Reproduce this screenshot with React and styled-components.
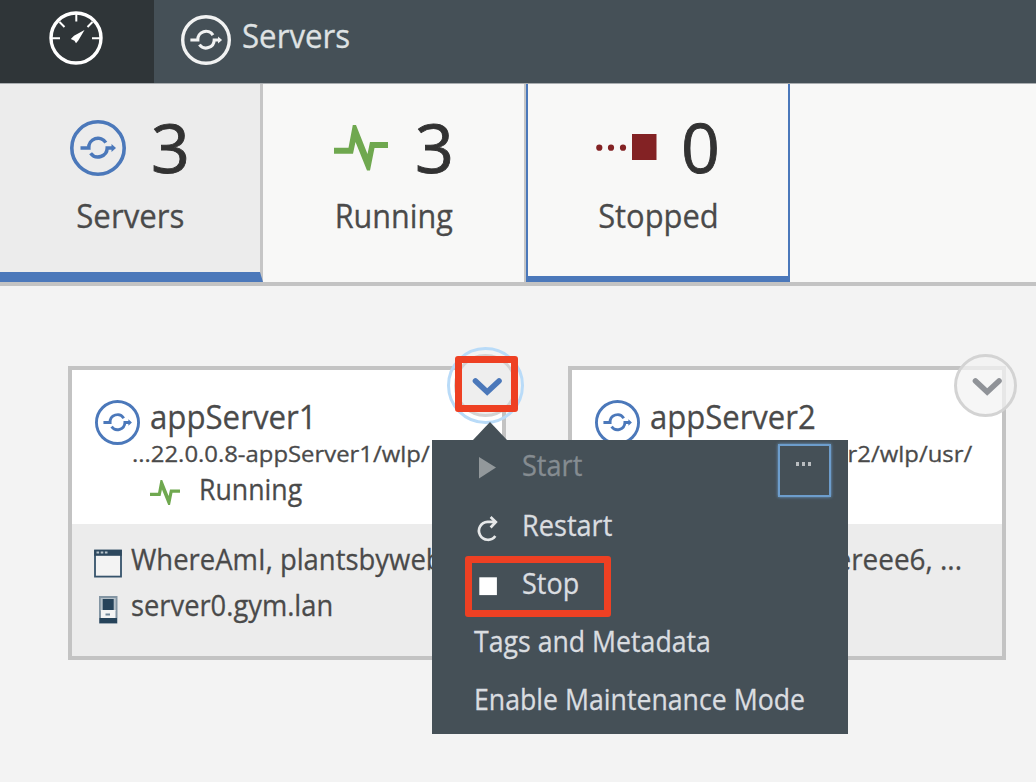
import React from "react";
import styled, { createGlobalStyle, css } from "styled-components";

const GlobalStyle = createGlobalStyle`
  * { box-sizing: border-box; }
  body {
    margin: 0;
    background: #f3f3f3;
    font-family: "Open Sans", "Noto Sans", sans-serif;
    color: #4a4a4a;
    overflow: hidden;
  }
  svg { display: block; flex: none; }
`;

const Page = styled.div`
  position: relative;
  width: 1036px;
  height: 782px;
  overflow: hidden;
`;

const Text = styled.span`
  display: block;
  flex: none;
  white-space: pre;
  font-size: ${(p) => p.$size}px;
  line-height: ${(p) => p.$line || 40}px;
  -webkit-text-stroke: ${(p) => p.$weight || 0.3}px currentColor;
  transform: scaleX(${(p) => p.$stretch || 1});
  transform-origin: ${(p) => p.$origin || "left"} center;
`;

const Header = styled.header`
  display: flex;
  height: 84px;
  background: #455057;
  border-bottom: 1px solid #a9adb0;
`;

const HomeButton = styled.div`
  width: 154px;
  padding: 11px 0 0 49px;
  background: #2f3538;
`;

const HeaderTitle = styled.div`
  display: flex;
  padding: 15px 0 0 27px;
  color: #dfe2e3;

  ${Text} {
    margin: 1px 0 0 11px;
  }
`;

const Tiles = styled.nav`
  display: flex;
  height: 202px;
  background: #f8f8f7;
  border-bottom: 4px solid #c3c3c3;
`;

const Tile = styled.div`
  display: flex;
  flex-direction: column;
  align-items: center;
  width: 264px;
  padding-top: 34px;
  border-right: 3px solid #c6c6c6;
  ${(p) =>
    p.$selected &&
    css`
      width: 263px;
      margin-right: 1px;
      background: #ececec;
      border-bottom: 10px solid #4b78ba;
    `}
  ${(p) =>
    p.$focused &&
    css`
      border: solid #4b78ba;
      border-width: 0 2px 6px 2px;
    `}
  ${(p) =>
    p.$plain &&
    css`
      width: 262px;
      border-right: 2px solid #c6c6c6;
    `}
`;

const Tally = styled.div`
  display: flex;
  align-items: center;
  gap: ${(p) => p.$gap}px;
  height: 60px;
  margin-bottom: 18px;
  color: #323232;

  ${Text} {
    margin-top: -2px;
  }
`;

const Cards = styled.main`
  display: flex;
  gap: 62px;
  padding: 80px 0 0 68px;
`;

const Card = styled.section`
  position: relative;
  width: 438px;
  height: 294px;
  border: 4px solid #c3c3c3;
  background: #fff;
`;

const CardTop = styled.div`
  display: flex;
  gap: 10px;
  height: 154px;
  padding: 30px 0 0 23px;
`;

const CardInfo = styled.div`
  flex: 1;
  min-width: 0;
  margin-top: -3px;
`;

const PathLine = styled.div`
  display: flex;
  justify-content: ${(p) => (p.$end ? "flex-end" : "flex-start")};
  margin: -1px 0 0 -18px;
  padding-right: 30px;
  height: 33px;
`;

const State = styled.div`
  display: flex;
  align-items: center;
  gap: 19px;

  svg {
    margin-top: 7px;
  }
`;

const CardBottom = styled.div`
  height: 132px;
  padding: 17px 0 0 22px;
  background: #ececec;
`;

const Detail = styled.div`
  display: flex;
  align-items: center;
  justify-content: ${(p) => (p.$end ? "flex-end" : "flex-start")};
  gap: 8px;
  height: 40px;
  margin-bottom: 6px;
  padding-right: ${(p) => (p.$end ? 40 : 0)}px;

  svg {
    margin-top: 4px;
  }

  ${Text} {
    margin-top: -4px;
  }
`;

const ActionButton = styled.div`
  position: absolute;
  top: -16px;
  right: -15px;
  display: flex;
  align-items: center;
  justify-content: center;
  width: 63px;
  height: 63px;
  border: 3px solid #d3d3d3;
  border-radius: 50%;
  background: ${(p) => (p.$active ? "#eeeeee" : "rgba(243, 243, 243, 0.75)")};

  svg {
    position: relative;
    top: 1px;
    left: 1px;
  }
  ${(p) =>
    p.$active &&
    css`
      &::after {
        content: "";
        position: absolute;
        inset: -10px;
        border: 3px solid #b9dbf8;
        border-radius: 50%;
      }
    `}
`;

const Menu = styled.div`
  position: absolute;
  left: 432px;
  top: 440px;
  width: 416px;
  height: 294px;
  padding: 5px 0 0 42px;
  background: #455057;
  color: #dadde0;
`;

const MenuArrow = styled.div`
  position: absolute;
  top: -18px;
  left: 41px;
  border: solid transparent;
  border-width: 0 17px 18px 17px;
  border-bottom-color: #455057;
`;

const MenuItem = styled.div`
  display: flex;
  align-items: center;
  height: 40px;
  margin-bottom: ${(p) => p.$after || 18}px;
  color: ${(p) => (p.$disabled ? "#858c91" : "inherit")};

  svg {
    width: 48px;
    height: 40px;
  }
`;

const MoreButton = styled.div`
  position: absolute;
  top: 4px;
  right: 17px;
  display: flex;
  justify-content: center;
  gap: 3px;
  width: 53px;
  height: 53px;
  padding: 16px 3px 0 0;
  border: 2px solid #6d9dcc;
  box-shadow: 0 0 3px #6d9dcc;
`;

const Dot = styled.i`
  width: 3px;
  height: 4px;
  background: #b9bdc0;
`;

const Highlight = styled.div`
  position: absolute;
  left: ${(p) => p.$x}px;
  top: ${(p) => p.$y}px;
  width: ${(p) => p.$w}px;
  height: ${(p) => p.$h}px;
  border: 7px solid #ee4023;
  border-radius: 3px;
`;

const ServerIcon = ({ size, color = "#4b78ba", stroke = 3.6 }) => (
  <svg width={size} height={size} viewBox="0 0 56 56" fill="none" stroke={color} strokeWidth={stroke}>
    <circle cx="28" cy="28" r={28 - stroke / 2} />
    <path
      d="M10.5 28H18.8A9.2 9.2 0 0 1 35.8 22.6M20.6 33.2A9.2 9.2 0 0 0 37.2 28H43"
      strokeWidth="3.5"
    />
    <path d="M41.5 24L46 28L41.5 32Z" fill={color} stroke="none" />
  </svg>
);

const GaugeIcon = () => (
  <svg width="54" height="54" viewBox="0 0 54 54" fill="none" stroke="#fff">
    <circle cx="27" cy="27" r="25" strokeWidth="3.4" />
    <path d="M27.3 3V10.5M3 27.3H11M43 27.3H51M10.5 11L15.5 16M43.5 11L38.5 16" strokeWidth="2" />
    <path d="M35.5 19L29.3 29.5L27 32.3L25.5 29.8L21.8 28L25 24.8Z" fill="#fff" stroke="none" />
  </svg>
);

const PulseIcon = ({ width }) => (
  <svg width={width} height={(width * 46) / 54} viewBox="0 0 54 46" fill="#6fa84f">
    <path d="M0 22.8H14.5L18.8 0H22L33.5 29L36 17H54V23H40.5L36 45.5H33L21.5 17L19 28.8H0Z" />
  </svg>
);

const StoppedIcon = () => (
  <svg width="61" height="28" viewBox="0 0 61 28" fill="#832224">
    <circle cx="3.3" cy="13.7" r="3.1" />
    <circle cx="15" cy="13.7" r="3.1" />
    <circle cx="27" cy="13.7" r="3.1" />
    <rect x="36" y="0" width="24.5" height="26" />
  </svg>
);

const ChevronIcon = ({ color }) => (
  <svg width="32" height="20" viewBox="0 0 32 20" fill="none" stroke={color} strokeWidth="5.6" strokeLinecap="round">
    <path d="M4.5 4L16.2 15L28 4" />
  </svg>
);

const WindowIcon = () => (
  <svg width="29" height="40" viewBox="0 0 29 40">
    <rect x="1" y="7.6" width="26" height="26" fill="#f3f3f3" stroke="#36536b" strokeWidth="1.8" />
    <rect x="0.2" y="6.8" width="27.6" height="6" fill="#2d485e" />
    <path d="M2.5 9.5H14.5" stroke="#b8c3cb" strokeWidth="2" strokeDasharray="2.6 1.6" />
  </svg>
);

const HostIcon = () => (
  <svg width="29" height="40" viewBox="0 0 29 40">
    <rect x="5" y="7" width="18.5" height="27.5" fill="#8395a3" />
    <rect x="6.7" y="9" width="15" height="13" fill="#b5c0c8" />
    <rect x="8.7" y="10" width="11" height="11" fill="#26435a" />
    <rect x="7" y="21" width="14.5" height="8" fill="#f4f4f4" />
    <rect x="11.5" y="24.5" width="4.5" height="2" fill="#71889a" />
    <rect x="5.5" y="29" width="17.5" height="5.2" fill="#26435a" />
  </svg>
);

const StartIcon = () => (
  <svg viewBox="0 0 48 40">
    <path d="M5 12L22 22.5L5 33.5Z" fill="#92989b" />
  </svg>
);

const RestartIcon = () => (
  <svg viewBox="0 0 48 40" fill="none" stroke="#e6e8e9" strokeWidth="2.7">
    <path d="M21.3 31A9 9 0 1 1 13.5 16.8H20" />
    <path d="M16.6 12L21.8 17L16.6 22.5" />
  </svg>
);

const StopIcon = () => (
  <svg viewBox="0 0 48 40">
    <rect x="5.3" y="14.3" width="17.6" height="17.8" fill="#fff" />
  </svg>
);

export default function App() {
  return (
    <Page>
      <GlobalStyle />
      <Header>
        <HomeButton>
          <GaugeIcon />
        </HomeButton>
        <HeaderTitle>
          <ServerIcon size={50} color="#f1f2f2" stroke={3.8} />
          <Text $size={32} $stretch={0.975}>Servers</Text>
        </HeaderTitle>
      </Header>

      <Tiles>
        <Tile $selected>
          <Tally $gap={25}>
            <ServerIcon size={56} />
            <Text $size={68} $line={58} $weight={0.9}>3</Text>
          </Tally>
          <Text $size={32.5} $stretch={0.96} $origin="center">Servers</Text>
        </Tile>
        <Tile $plain>
          <Tally $gap={27}>
            <PulseIcon width={54} />
            <Text $size={68} $line={58} $weight={0.9}>3</Text>
          </Tally>
          <Text $size={32.5} $stretch={0.94} $origin="center">Running</Text>
        </Tile>
        <Tile $focused>
          <Tally $gap={24}>
            <StoppedIcon />
            <Text $size={68} $line={58} $weight={0.9}>0</Text>
          </Tally>
          <Text $size={32.5} $stretch={0.95} $origin="center">Stopped</Text>
        </Tile>
      </Tiles>

      <Cards>
        <Card>
          <CardTop>
            <ServerIcon size={45} />
            <CardInfo>
              <Text $size={32.5} $stretch={0.96}>appServer1</Text>
              <PathLine>
                <Text $size={22} $line={34} $stretch={1.085}>...22.0.0.8-appServer1/wlp/</Text>
              </PathLine>
              <State>
                <PulseIcon width={30} />
                <Text $size={29} $stretch={0.92}>Running</Text>
              </State>
            </CardInfo>
          </CardTop>
          <CardBottom>
            <Detail>
              <WindowIcon />
              <Text $size={30} $stretch={0.915}>WhereAmI, plantsbyweb</Text>
            </Detail>
            <Detail>
              <HostIcon />
              <Text $size={30} $stretch={0.91}>server0.gym.lan</Text>
            </Detail>
          </CardBottom>
          <ActionButton $active>
            <ChevronIcon color="#4b78ba" />
          </ActionButton>
        </Card>

        <Card>
          <CardTop>
            <ServerIcon size={45} />
            <CardInfo>
              <Text $size={32.5} $stretch={0.955}>appServer2</Text>
              <PathLine $end>
                <Text $size={22} $line={34} $stretch={1.085} $origin="right">er2/wlp/usr/</Text>
              </PathLine>
            </CardInfo>
          </CardTop>
          <CardBottom>
            <Detail $end>
              <Text $size={30} $stretch={0.93} $origin="right">ereee6, ...</Text>
            </Detail>
          </CardBottom>
          <ActionButton>
            <ChevronIcon color="#909398" />
          </ActionButton>
        </Card>
      </Cards>

      <Menu>
        <MenuArrow />
        <MenuItem $disabled $after={20}>
          <StartIcon />
          <Text $size={29} $stretch={0.935}>Start</Text>
        </MenuItem>
        <MenuItem>
          <RestartIcon />
          <Text $size={29} $stretch={0.935}>Restart</Text>
        </MenuItem>
        <MenuItem>
          <StopIcon />
          <Text $size={29} $stretch={0.93}>Stop</Text>
        </MenuItem>
        <MenuItem>
          <Text $size={29} $stretch={0.92}>Tags and Metadata</Text>
        </MenuItem>
        <MenuItem>
          <Text $size={29} $stretch={0.92}>Enable Maintenance Mode</Text>
        </MenuItem>
        <MoreButton>
          <Dot />
          <Dot />
          <Dot />
        </MoreButton>
      </Menu>

      <Highlight $x={455} $y={356} $w={63} $h={56} />
      <Highlight $x={465} $y={556} $w={146} $h={61} />
    </Page>
  );
}
